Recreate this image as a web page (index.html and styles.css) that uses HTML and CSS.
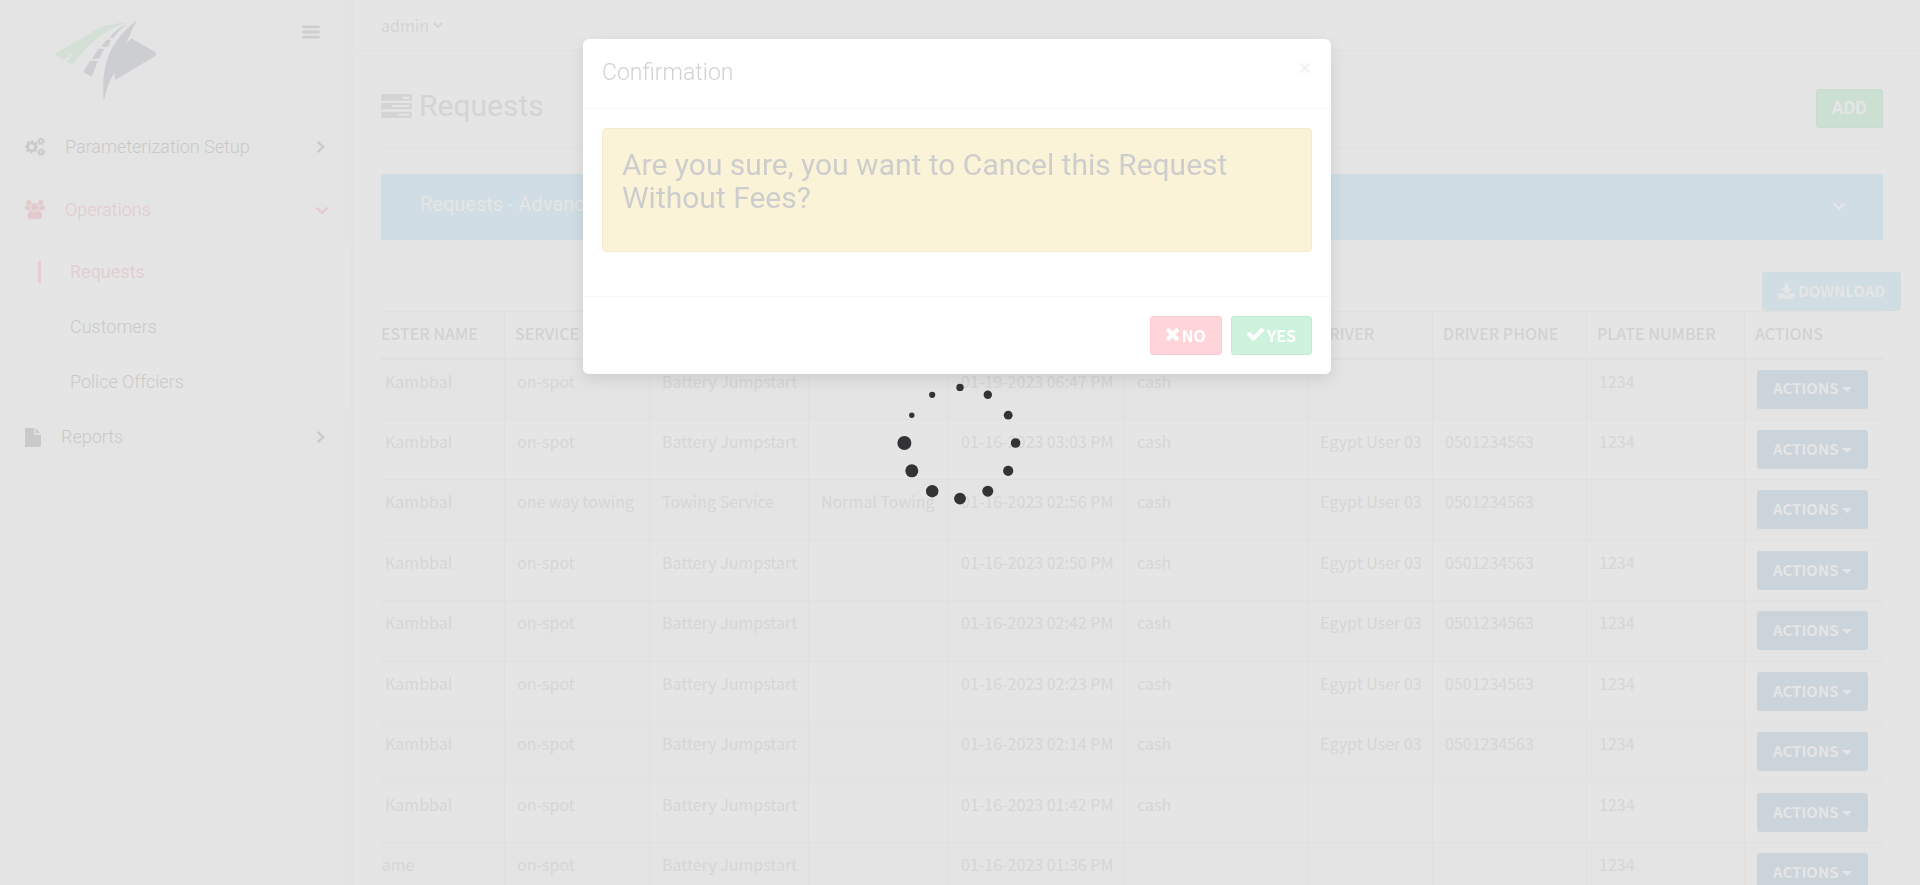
FILE: index.html
```
<!DOCTYPE html>
<html lang="en">
<head>
<meta charset="utf-8">
<title>Requests</title>
<link rel="stylesheet" href="styles.css">
</head>
<body>
<div class="app">
  <aside class="sidebar">
    <div class="brand">
      <svg class="logo" viewBox="165 55 306 246" role="img" aria-label="Logo">
        <path fill="#d4dfd6" d="M170 156L309 75Q314 73 328 74Q350 67 376 66Q345 78 322 91Q265 128 217 193L200 183Q212 166 228 151Q208 163 190 178L171 166Q165 161 170 156Z"/>
        <path fill="#cdced1" d="M411 58Q388 100 380 129L393 113L466 154Q471 160 466 166L345 238L343 216Q325 245 311 300Q305 220 323 172Q345 110 411 58ZM382 68Q345 88 329 111L341 111Q355 90 382 68ZM320 117L333 117L324 138L303 138ZM296 144L313 144L297 174L276 174ZM270 180L294 180L275 228L250 214Z"/>
      </svg>
      <button class="toggle" aria-label="Toggle menu"><svg viewBox="0 0 52 40"><path stroke="currentColor" stroke-width="8" stroke-linecap="round" d="M4 5H48M4 20H48M4 35H48"/></svg></button>
    </div>
    <nav class="menu">
      <a class="item" href="#">
        <svg class="ico" viewBox="75 409 61 58" fill="none" stroke="currentColor"><circle cx="95" cy="439" r="12" stroke-width="8"/><circle cx="95" cy="439" r="17" stroke-width="6" stroke-dasharray="7 6.35" stroke-dashoffset="3.5"/><g><circle cx="124" cy="422" r="6" stroke-width="5"/><circle cx="124" cy="422" r="10" stroke-width="4" stroke-dasharray="4.2 3.65" stroke-dashoffset="-2"/><circle cx="124" cy="455" r="6" stroke-width="5"/><circle cx="124" cy="455" r="10" stroke-width="4" stroke-dasharray="4.2 3.65" stroke-dashoffset="-2"/></g></svg>
        <span>Parameterization Setup</span>
        <svg class="arrow" viewBox="0 0 12 12"><path d="M2.200 1.500L7 6L2.200 10.500"/></svg>
      </a>
      <a class="item active" href="#">
        <svg class="ico" viewBox="75 599 61 58" fill="currentColor"><circle cx="87" cy="607" r="8"/><circle cx="123" cy="607" r="8"/><path d="M81 616Q87 619 92 616Q89 625 94 630L84 630Q75 630 75 623Q75 615 81 616ZM129 616Q123 619 118 616Q121 625 116 630L127 630Q136 630 136 623Q136 615 129 616Z"/><circle cx="105" cy="620" r="11.500"/><path d="M94 631Q105 638 117 631Q127 634 127 648Q127 657 118 657H92Q83 657 83 648Q83 634 94 631Z"/></svg>
        <span>Operations</span>
        <svg class="arrow" viewBox="0 0 12 12"><path d="M1.500 4L6 8.500L10.500 4"/></svg>
      </a>
      <div class="submenu">
        <a class="sub current" href="#">Requests</a>
        <a class="sub" href="#">Customers</a>
        <a class="sub" href="#">Police Offciers</a>
      </div>
      <a class="item reports" href="#">
        <svg class="ico file" viewBox="0 0 48 57" fill="currentColor"><path d="M3 0H28V17Q28 20 31 20H48V54Q48 57 45 57H3Q0 57 0 54V3Q0 0 3 0ZM32 1L46 15H32Z"/></svg>
        <span>Reports</span>
        <svg class="arrow" viewBox="0 0 12 12"><path d="M2.200 1.500L7 6L2.200 10.500"/></svg>
      </a>
    </nav>
  </aside>
  <main class="main">
    <header class="topbar"><button class="user">admin <svg viewBox="0 0 12 12"><path d="M1 4L5 8L9 4"/></svg></button></header>
    <div class="content">
      <div class="heading">
        <h1><svg viewBox="0 0 92 72"><path fill="currentColor" fill-rule="evenodd" d="M2 0H90Q92 0 92 2V18Q92 20 90 20H2Q0 20 0 18V2Q0 0 2 0ZM66 8V15H85V8ZM2 27H90Q92 27 92 29V44Q92 46 90 46H2Q0 46 0 44V29Q0 27 2 27ZM33 33V39H85V33ZM2 53H90Q92 53 92 55V70Q92 72 90 72H2Q0 72 0 70V55Q0 53 2 53ZM52 59V65H85V59Z"/></svg> Requests</h1>
        <button class="btn add">ADD</button>
      </div>
      <section class="panel"><h2>Requests - Advanced Search</h2><svg class="arrow" viewBox="0 0 12 12"><path d="M1.500 3L6 7.500L10.500 3"/></svg></section>
      <div class="tools"><button class="btn download"><svg viewBox="64 0 1664 1536" fill="currentColor"><path d="M1344 1344q0-26-19-45t-45-19-45 19-19 45 19 45 45 19 45-19 19-45zm256 0q0-26-19-45t-45-19-45 19-19 45 19 45 45 19 45-19 19-45zm128-224v320q0 40-28 68t-68 28h-1472q-40 0-68-28t-28-68v-320q0-40 28-68t68-28h465l135 136q58 56 136 56t136-56l136-136h464q40 0 68 28t28 68zm-325-569q17 41-14 70l-448 448q-18 19-45 19t-45-19l-448-448q-31-29-14-70 17-39 59-39h256v-448q0-26 19-45t45-19h256q26 0 45 19t19 45v448h256q42 0 59 39z"/></svg> DOWNLOAD</button></div>
      <div class="scroll">
        <table>
          <colgroup><col class="c1"><col class="c2"><col class="c3"><col class="c4"><col class="c5"><col class="c6"><col class="c7"><col class="c8"><col class="c9"><col class="c10"></colgroup>
          <thead><tr><th>REQUESTER NAME</th><th>SERVICE TYPE</th><th>SERVICE</th><th>SUB SERVICE</th><th>DATE</th><th>PAYMENT</th><th>DRIVER</th><th>DRIVER PHONE</th><th>PLATE NUMBER</th><th>ACTIONS</th></tr></thead>
          <tbody>
            <tr><td>Kambbal</td><td>on-spot</td><td>Battery Jumpstart</td><td></td><td>01-19-2023 06:47 PM</td><td>cash</td><td></td><td></td><td>1234</td><td><button class="btn act">ACTIONS</button></td></tr>
            <tr><td>Kambbal</td><td>on-spot</td><td>Battery Jumpstart</td><td></td><td>01-16-2023 03:03 PM</td><td>cash</td><td>Egypt User 03</td><td>0501234563</td><td>1234</td><td><button class="btn act">ACTIONS</button></td></tr>
            <tr><td>Kambbal</td><td>one way towing</td><td>Towing Service</td><td>Normal Towing</td><td>01-16-2023 02:56 PM</td><td>cash</td><td>Egypt User 03</td><td>0501234563</td><td></td><td><button class="btn act">ACTIONS</button></td></tr>
            <tr><td>Kambbal</td><td>on-spot</td><td>Battery Jumpstart</td><td></td><td>01-16-2023 02:50 PM</td><td>cash</td><td>Egypt User 03</td><td>0501234563</td><td>1234</td><td><button class="btn act">ACTIONS</button></td></tr>
            <tr><td>Kambbal</td><td>on-spot</td><td>Battery Jumpstart</td><td></td><td>01-16-2023 02:42 PM</td><td>cash</td><td>Egypt User 03</td><td>0501234563</td><td>1234</td><td><button class="btn act">ACTIONS</button></td></tr>
            <tr><td>Kambbal</td><td>on-spot</td><td>Battery Jumpstart</td><td></td><td>01-16-2023 02:23 PM</td><td>cash</td><td>Egypt User 03</td><td>0501234563</td><td>1234</td><td><button class="btn act">ACTIONS</button></td></tr>
            <tr><td>Kambbal</td><td>on-spot</td><td>Battery Jumpstart</td><td></td><td>01-16-2023 02:14 PM</td><td>cash</td><td>Egypt User 03</td><td>0501234563</td><td>1234</td><td><button class="btn act">ACTIONS</button></td></tr>
            <tr><td>Kambbal</td><td>on-spot</td><td>Battery Jumpstart</td><td></td><td>01-16-2023 01:42 PM</td><td>cash</td><td></td><td></td><td>1234</td><td><button class="btn act">ACTIONS</button></td></tr>
            <tr><td class="short">name</td><td>on-spot</td><td>Battery Jumpstart</td><td></td><td>01-16-2023 01:36 PM</td><td></td><td></td><td></td><td>1234</td><td><button class="btn act">ACTIONS</button></td></tr>
          </tbody>
        </table>
      </div>
    </div>
  </main>
</div>
<div class="overlay">
  <div class="modal" role="dialog" aria-labelledby="modal-title">
    <div class="modal-head"><h3 id="modal-title">Confirmation</h3><button class="close" aria-label="Close"><svg viewBox="0 0 12 12"><path d="M2 2L10 10M10 2L2 10"/></svg></button></div>
    <div class="modal-body"><div class="alert"><p>Are you sure, you want to Cancel this Request Without Fees?</p></div></div>
    <div class="modal-foot">
      <button class="btn no"><svg viewBox="300 366 1192 1192" fill="currentColor"><path d="M1490 1322q0 40-28 68l-136 136q-28 28-68 28t-68-28l-294-294-294 294q-28 28-68 28t-68-28l-136-136q-28-28-28-68t28-68l294-294-294-294q-28-28-28-68t28-68l136-136q28-28 68-28t68 28l294 294 294-294q28-28 68-28t68 28l136 136q28 28 28 68t-28 68l-294 294 294 294q28 28 28 68z"/></svg> NO</button>
      <button class="btn yes"><svg viewBox="121 334 1550 1188" fill="currentColor"><path d="M1671 566q0 40-28 68l-724 724-136 136q-28 28-68 28t-68-28l-136-136-362-362q-28-28-28-68t28-68l136-136q28-28 68-28t68 28l294 295 656-657q28-28 68-28t68 28l136 136q28 28 28 68z"/></svg> YES</button>
    </div>
  </div>
</div>
<div class="loader" role="status" aria-label="Loading">
  <svg viewBox="-64 -64 128 128" fill="#333234"><circle cx="0" cy="-55.600" r="3.700"/><circle cx="27.800" cy="-48.200" r="4.200"/><circle cx="48.200" cy="-27.800" r="4.400"/><circle cx="55.600" cy="0" r="4.800"/><circle cx="48.200" cy="27.800" r="5.100"/><circle cx="27.800" cy="48.200" r="5.500"/><circle cx="0" cy="55.600" r="5.900"/><circle cx="-27.800" cy="48.200" r="6.200"/><circle cx="-48.200" cy="27.800" r="6.500"/><circle cx="-55.600" cy="0" r="7"/><circle cx="-48.200" cy="-27.800" r="2.700"/><circle cx="-27.800" cy="-48.200" r="3.100"/></svg>
</div>
</body>
</html>
```
FILE: styles.css
```
* { box-sizing: border-box; }
body { margin: 0; height: 100vh; overflow: hidden; background: #e5e5e5; color: #d2d2d2; font-family: "Noto Sans CJK SC", "Noto Sans", sans-serif; font-size: 16px; line-height: 20px; }
h1, h2, h3, p { margin: 0; }
a { color: inherit; text-decoration: none; }
button { font: inherit; color: inherit; background: none; border: 0; padding: 0; }
svg { display: block; }
.app { display: flex; height: 100%; }
.sidebar { flex: 0 0 353px; border-right: 2px solid #e2e2e2; background: #e4e4e4; font-family: Roboto, sans-serif; font-size: 18px; font-weight: 300; color: #c9c9c9; }
.brand { display: flex; justify-content: space-between; align-items: flex-start; padding: 19px 31px 0 55px; height: 115px; }
.logo { width: 102px; height: 82px; }
.toggle { margin-top: 6px; color: #cecece; }
.toggle svg { width: 18px; height: 14px; }
.item { display: flex; align-items: center; gap: 20px; height: 63px; padding: 0 22px 0 25px; }
.item span { flex: 1; }
.ico { width: 20px; height: 19px; }
.file { width: 16px; }
.reports { height: 54px; }
.active { color: #e3cacd; margin-bottom: 2px; }
.arrow { width: 14px; height: 14px; fill: none; stroke: currentColor; stroke-width: 2; }
.submenu { border: solid #e3e3e3; border-width: 1px 0; background: #e5e5e5; }
.sub { display: flex; align-items: center; height: 55px; padding-left: 70px; }
.current { color: #e3cfd2; font-weight: 400; position: relative; }
.current::before { content: ""; position: absolute; left: 38px; width: 3px; height: 22px; background: currentColor; }
.main { flex: 1; min-width: 0; }
.topbar { height: 51px; border-bottom: 1px solid #e1e1e1; padding: 15px 28px; }
.user { display: flex; align-items: center; gap: 4px; color: #d4d4d4; }
.user svg { width: 12px; height: 12px; fill: none; stroke: currentColor; stroke-width: 2; }
.content { padding: 38px 37px 0 28px; }
.heading { display: flex; justify-content: space-between; align-items: flex-start; height: 59px; border-bottom: 1px solid #e1e1e1; }
h1 { display: flex; align-items: center; gap: 7px; font: 400 30px/33px Roboto, sans-serif; color: #d4d4d4; }
h1 svg { width: 31px; height: 24px; }
.btn { display: inline-flex; align-items: center; justify-content: center; gap: 3px; height: 39px; border: 1px solid transparent; border-radius: 3px; padding: 0 15px 2px; font-size: 15px; font-weight: 700; color: #e5e5e5; }
.add { background: #cbdfd2; border-color: #c9dccf; font-family: Roboto, sans-serif; font-size: 18px; }
.panel { display: flex; align-items: center; justify-content: space-between; height: 66px; margin-top: 26px; padding: 0 37px 0 39px; background: #d0dde4; color: #e5e5e5; }
.panel h2 { font: 400 20px/22px Roboto, sans-serif; padding-bottom: 6px; }
.tools { display: flex; justify-content: flex-end; margin: 32px -18px 0 0; }
.download { background: #d0dde2; }
.download svg { width: 17px; height: 16px; }
.scroll { overflow: hidden; }
table { width: calc(100% + 55px); margin-left: -55px; table-layout: fixed; border-collapse: collapse; }
.c1 { width: 178px; } .c2 { width: 145px; } .c3 { width: 159px; } .c4 { width: 140px; } .c5 { width: 176px; }
.c6 { width: 183px; } .c7 { width: 125px; } .c8 { width: 154px; } .c9 { width: 158px; } .c10 { width: 139px; }
th, td { border: 1px solid #e0e0e0; text-align: left; white-space: nowrap; overflow: hidden; vertical-align: top; }
th { height: 47px; padding: 11px 10px; font-weight: 500; border-bottom-width: 2px; }
td { height: 60px; padding: 11px 12px 0; font-weight: 400; color: #d6d6d6; }
tbody tr:nth-child(odd) { background: #e4e4e4; }
tbody tr:nth-child(odd) td { height: 61px; }
td:first-child { padding-left: 58px; }
td.short:first-child { padding-left: 45px; }
td:last-child { padding-top: 10px; line-height: 0; }
.act { background: #cbd3db; line-height: 20px; }
.act::after { content: ""; border: 5px solid transparent; border-top-color: currentColor; border-bottom: 0; margin-top: 3px; }
.overlay { position: fixed; inset: 0; display: flex; justify-content: center; align-items: flex-start; padding: 39px 6px 0 0; }
.modal { width: 748px; border-radius: 6px; background: #fff; box-shadow: 0 5px 15px rgba(0,0,0,.1); }
.modal-head { display: flex; justify-content: space-between; align-items: flex-start; height: 70px; padding: 20px 19px; border-bottom: 1px solid #f8f8f8; }
.modal-head h3 { font: 300 23px/28px Roboto, sans-serif; color: #d2d2d2; }
.close svg { width: 14px; height: 14px; margin-top: 2px; fill: none; stroke: #f3f3f3; stroke-width: 2; }
.modal-body { padding: 19px 19px 44px; }
.alert { min-height: 124px; padding: 19px; border: 1px solid #f4ead0; border-radius: 4px; background: #fbf3d8; color: #cdcdcd; }
.alert p { font: 400 30px/33px Roboto, sans-serif; }
.modal-foot { display: flex; justify-content: flex-end; gap: 9px; padding: 19px; border-top: 1px solid #f8f8f8; }
.modal .btn { color: #fff; font-size: 16px; }
.modal .no { background: #ffd5da; border-color: #fbcbd1; }
.modal .yes { background: #cdf3dc; border-color: #c4ebd1; }
.no svg { width: 13px; height: 13px; }
.yes svg { width: 17px; height: 13px; }
.loader { position: fixed; inset: 0; display: flex; align-items: center; justify-content: center; }
.loader svg { width: 128px; height: 128px; }
```
